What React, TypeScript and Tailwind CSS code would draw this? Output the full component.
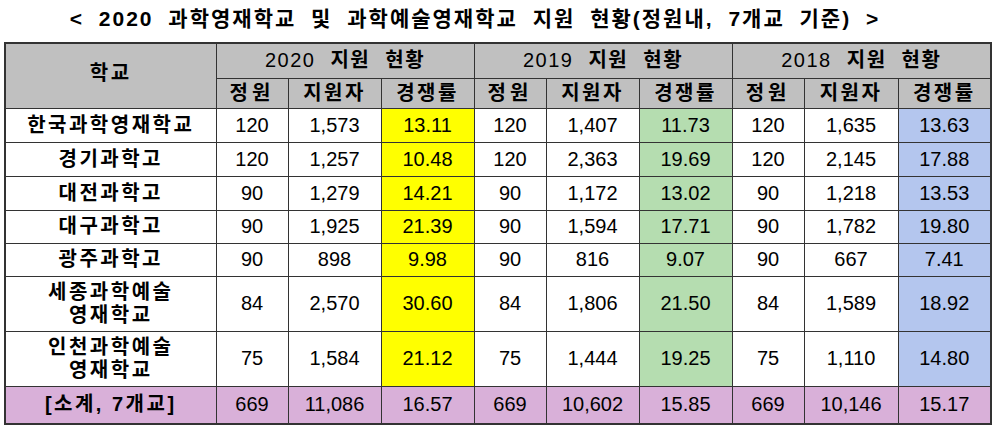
import React from "react";

type Row = { name: string[]; v: string[] };

const rows: Row[] = [
  { name: ["한국과학영재학교"], v: ["120", "1,573", "13.11", "120", "1,407", "11.73", "120", "1,635", "13.63"] },
  { name: ["경기과학고"], v: ["120", "1,257", "10.48", "120", "2,363", "19.69", "120", "2,145", "17.88"] },
  { name: ["대전과학고"], v: ["90", "1,279", "14.21", "90", "1,172", "13.02", "90", "1,218", "13.53"] },
  { name: ["대구과학고"], v: ["90", "1,925", "21.39", "90", "1,594", "17.71", "90", "1,782", "19.80"] },
  { name: ["광주과학고"], v: ["90", "898", "9.98", "90", "816", "9.07", "90", "667", "7.41"] },
  { name: ["세종과학예술", "영재학교"], v: ["84", "2,570", "30.60", "84", "1,806", "21.50", "84", "1,589", "18.92"] },
  { name: ["인천과학예술", "영재학교"], v: ["75", "1,584", "21.12", "75", "1,444", "19.25", "75", "1,110", "14.80"] },
];

const heights = ["h-[34px]", "h-[34px]", "h-[34px]", "h-[33px]", "h-[33px]", "h-[55px]", "h-[55px]"];

const rateBg = ["bg-[#ffff00]", "bg-[#b5ddb0]", "bg-[#b4c6ee]"];

const cell = "border border-[#333] text-center align-middle p-0";
const kor = "font-bold tracking-[2.5px]";

export default function App() {
  return (
    <div
      className="w-[996px] h-[430px] bg-white text-black overflow-hidden"
      style={{ fontFamily: '"Liberation Sans", "Noto Sans CJK KR", sans-serif' }}
    >
      <div className="h-[42px] flex items-center justify-center pb-[6px] pr-[46px]">
        <span className="text-[21px] font-bold tracking-[2px] [word-spacing:7px] leading-none">
          {"< 2020 과학영재학교 및 과학예술영재학교 지원 현황(정원내, 7개교 기준) >"}
        </span>
      </div>
      <table className="ml-[4px] w-[986px] table-fixed border-collapse border-2 border-[#333] text-[20px] leading-[23px]">
        <colgroup>
          <col className="w-[211px]" />
          <col className="w-[72px]" />
          <col className="w-[93px]" />
          <col className="w-[93px]" />
          <col className="w-[72px]" />
          <col className="w-[93px]" />
          <col className="w-[93px]" />
          <col className="w-[72px]" />
          <col className="w-[94px]" />
          <col className="w-[93px]" />
        </colgroup>
        <thead>
          <tr className="h-[35px] bg-[#c0c0c0]">
            <th rowSpan={2} className={`${cell} ${kor} pb-[4px]`}>학교</th>
            {["2020", "2019", "2018"].map((y) => (
              <th key={y} colSpan={3} className={`${cell} font-bold tracking-[1.5px] [word-spacing:8px]`}>
                <span className="font-normal">{y}</span> 지원 현황
              </th>
            ))}
          </tr>
          <tr className="h-[30px] bg-[#c0c0c0]">
            {[0, 1, 2].map((i) => (
              <React.Fragment key={i}>
                <th className={`${cell} ${kor} tracking-[4px]`}>정원</th>
                <th className={`${cell} ${kor}`}>지원자</th>
                <th className={`${cell} ${kor}`}>경쟁률</th>
              </React.Fragment>
            ))}
          </tr>
        </thead>
        <tbody>
          {rows.map((r, ri) => (
            <tr key={ri} className={heights[ri]}>
              <td className={`${cell} ${kor}`}>
                {r.name.map((n, i) => (
                  <div key={i}>{n}</div>
                ))}
              </td>
              {r.v.map((v, i) => (
                <td key={i} className={`${cell} ${i % 3 === 2 ? rateBg[Math.floor(i / 3)] : ""}`}>
                  {v}
                </td>
              ))}
            </tr>
          ))}
          <tr className="h-[38px] bg-[#d9b0d9]">
            <td className={`${cell} ${kor}`}>[소계, 7개교]</td>
            {["669", "11,086", "16.57", "669", "10,602", "15.85", "669", "10,146", "15.17"].map((v, i) => (
              <td key={i} className={cell}>
                {v}
              </td>
            ))}
          </tr>
        </tbody>
      </table>
    </div>
  );
}
